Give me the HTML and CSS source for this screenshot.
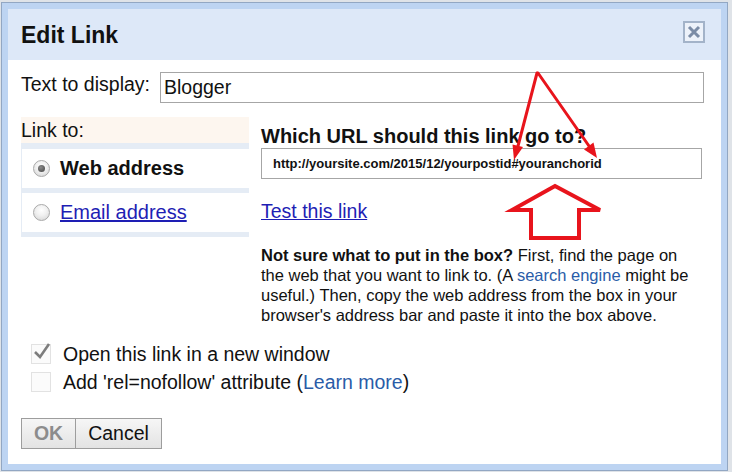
FILE: index.html
```html
<!DOCTYPE html>
<html>
<head>
<meta charset="utf-8">
<title>Edit Link</title>
<link rel="stylesheet" href="styles.css">
</head>
<body>
<div class="dialog">
  <div class="inner">
    <div class="titlebar">
      <span class="title">Edit Link</span>
      <span class="close">
        <svg width="18" height="18" viewBox="0 0 18 18"><path d="M4 4 L14 14 M14 4 L4 14" stroke="#7b8ca6" stroke-width="3" fill="none"/></svg>
      </span>
    </div>
    <div class="content">
      <div class="display-row">
        <span class="display-label">Text to display:</span>
        <div class="textbox">Blogger</div>
      </div>
      <div class="columns">
        <div class="linkto">
          <div class="linkto-head">Link to:</div>
          <div class="options">
            <div class="option"><span class="radio checked"></span><span class="opt-bold">Web address</span></div>
            <div class="option"><span class="radio"></span><a class="opt-link">Email address</a></div>
          </div>
        </div>
        <div class="urlcol">
          <div class="url-heading">Which URL should this link go to?</div>
          <div class="urlbox">http://yoursite.com/2015/12/yourpostid#youranchorid</div>
          <a class="test-link">Test this link</a>
          <p class="help"><b>Not sure what to put in the box?</b> First, find the page on the web that you want to link to. (A <a class="soft-link">search engine</a> might be useful.) Then, copy the web address from the box in your browser's address bar and paste it into the box above.</p>
        </div>
      </div>
      <div class="checks">
        <div class="check-row">
          <span class="checkbox"><svg width="20" height="20" viewBox="0 0 20 20"><path d="M3 10 L8 15 L17 2" stroke="#7d7d7d" stroke-width="2.6" fill="none"/></svg></span>
          <span>Open this link in a new window</span>
        </div>
        <div class="check-row">
          <span class="checkbox"></span>
          <span>Add 'rel=nofollow' attribute (<a class="soft-link">Learn more</a>)</span>
        </div>
      </div>
      <div class="buttons">
        <span class="btn btn-ok">OK</span><span class="btn btn-cancel">Cancel</span>
      </div>
    </div>
  </div>
</div>
<svg class="annotations" width="732" height="472" viewBox="0 0 732 472">
  <g stroke="#e8141c" stroke-width="3" fill="none" stroke-linecap="round">
    <path d="M537 73 L518 146"/>
    <path d="M538 73 L589 146"/>
  </g>
  <g fill="#e8141c">
    <polygon points="514,160 523,147 512.5,144.5"/>
    <polygon points="597,158 593.5,142.5 584,149.5"/>
  </g>
  <polygon points="555,186 600,210 579,210 579,238 531,238 531,210 512,210" stroke="#e8141c" stroke-width="4" fill="none" stroke-linejoin="miter"/>
</svg>
</body>
</html>
```

FILE: styles.css
```css
html, body {
  margin: 0;
  padding: 0;
}
body {
  width: 732px;
  height: 472px;
  overflow: hidden;
  background: #dfe3e8;
  font-family: "Liberation Sans", Arial, sans-serif;
  color: #111;
  position: relative;
}
.dialog {
  margin: 2px 0 0 1px;
  width: 727px;
  height: 469px;
  box-sizing: border-box;
  border: 1px solid #92a7c3;
  padding: 6px;
  background: #bdd4f2;
}
.inner {
  background: #fff;
  height: 455px;
  display: flex;
  flex-direction: column;
}
.titlebar {
  height: 51px;
  background: #dde8f8;
  display: flex;
  align-items: center;
  justify-content: space-between;
  padding: 0 16px 0 13px;
}
.title {
  font-size: 23px;
  font-weight: bold;
  margin-top: 2px;
}
.close {
  width: 22px;
  height: 22px;
  box-sizing: border-box;
  border: 2px solid #a3b3c9;
  background: #edf2fa;
  display: flex;
  align-items: center;
  justify-content: center;
  margin-bottom: 5px;
}
.close svg { display: block; }
.content {
  padding: 12px 17px 15px 13px;
  display: flex;
  flex-direction: column;
  font-size: 19.5px;
}
.display-row {
  display: flex;
  align-items: flex-start;
  gap: 10px;
}
.display-label {
  line-height: 22px;
  padding-top: 1px;
}
.textbox {
  flex: 1;
  height: 31px;
  box-sizing: border-box;
  border: 1px solid #a6a6a6;
  padding-left: 3px;
  line-height: 29px;
  font-size: 19.5px;
}
.columns {
  margin-top: 14px;
  display: flex;
  gap: 12px;
}
.linkto {
  width: 228px;
  flex: none;
  align-self: flex-start;
}
.linkto-head {
  height: 26px;
  line-height: 26px;
  background: #fdf6ef;
}
.options {
  background: #e5ecf5;
  padding: 6px 0 5px;
  display: flex;
  flex-direction: column;
  gap: 5px;
}
.option {
  height: 39px;
  margin-left: 1px;
  background: #fff;
  display: flex;
  align-items: center;
  padding-left: 11px;
}
.radio {
  width: 17px;
  height: 17px;
  box-sizing: border-box;
  border-radius: 50%;
  border: 1px solid #a9a9a9;
  background: radial-gradient(circle at 50% 35%, #ffffff 0%, #f0f0f0 45%, #d2d2d2 100%);
  margin-right: 10px;
  display: flex;
  align-items: center;
  justify-content: center;
  flex: none;
}
.radio.checked::after {
  content: "";
  width: 7px;
  height: 7px;
  border-radius: 50%;
  background: radial-gradient(circle at 40% 35%, #8a8a8a, #444);
}
.opt-bold {
  font-weight: bold;
  font-size: 20px;
}
.opt-link {
  color: #1e1eb4;
  text-decoration: underline;
  font-size: 20px;
}
.urlcol {
  width: 441px;
  flex: none;
  display: flex;
  flex-direction: column;
  align-items: flex-start;
}
.url-heading {
  font-size: 20px;
  font-weight: bold;
  line-height: 24px;
  padding-top: 7px;
}
.urlbox {
  width: 100%;
  height: 31px;
  box-sizing: border-box;
  border: 1px solid #a6a6a6;
  padding-left: 11px;
  font-size: 13px;
  font-weight: bold;
  line-height: 29px;
}
.test-link {
  margin-top: 21px;
  line-height: 22px;
  color: #1e1eb4;
  text-decoration: underline;
}
.help {
  margin: 23px 0 0;
  font-size: 16.5px;
  line-height: 20px;
  width: 441px;
}
.soft-link {
  color: #2a5ca8;
  text-decoration: none;
}
.checks {
  margin-top: 15px;
  display: flex;
  flex-direction: column;
}
.check-row {
  height: 28px;
  display: flex;
  align-items: center;
}
.checkbox {
  width: 20px;
  height: 20px;
  box-sizing: border-box;
  border: 1px solid #e2e2e2;
  background: #fbfbfb;
  margin-left: 10px;
  margin-right: 12px;
  position: relative;
  flex: none;
}
.checkbox svg {
  position: absolute;
  left: 0;
  top: -3px;
}
.buttons {
  margin-top: 22px;
  display: flex;
}
.btn {
  height: 31px;
  box-sizing: border-box;
  border: 1px solid #9d9d9d;
  background: linear-gradient(#f6f6f6, #e3e3e3);
  display: flex;
  align-items: center;
  justify-content: center;
  font-size: 19.5px;
}
.btn-ok {
  width: 55px;
  font-weight: bold;
  color: #8c8c8c;
}
.btn-cancel {
  width: 86px;
  border-left: none;
}
.annotations {
  position: absolute;
  left: 0;
  top: 0;
  pointer-events: none;
}
```
